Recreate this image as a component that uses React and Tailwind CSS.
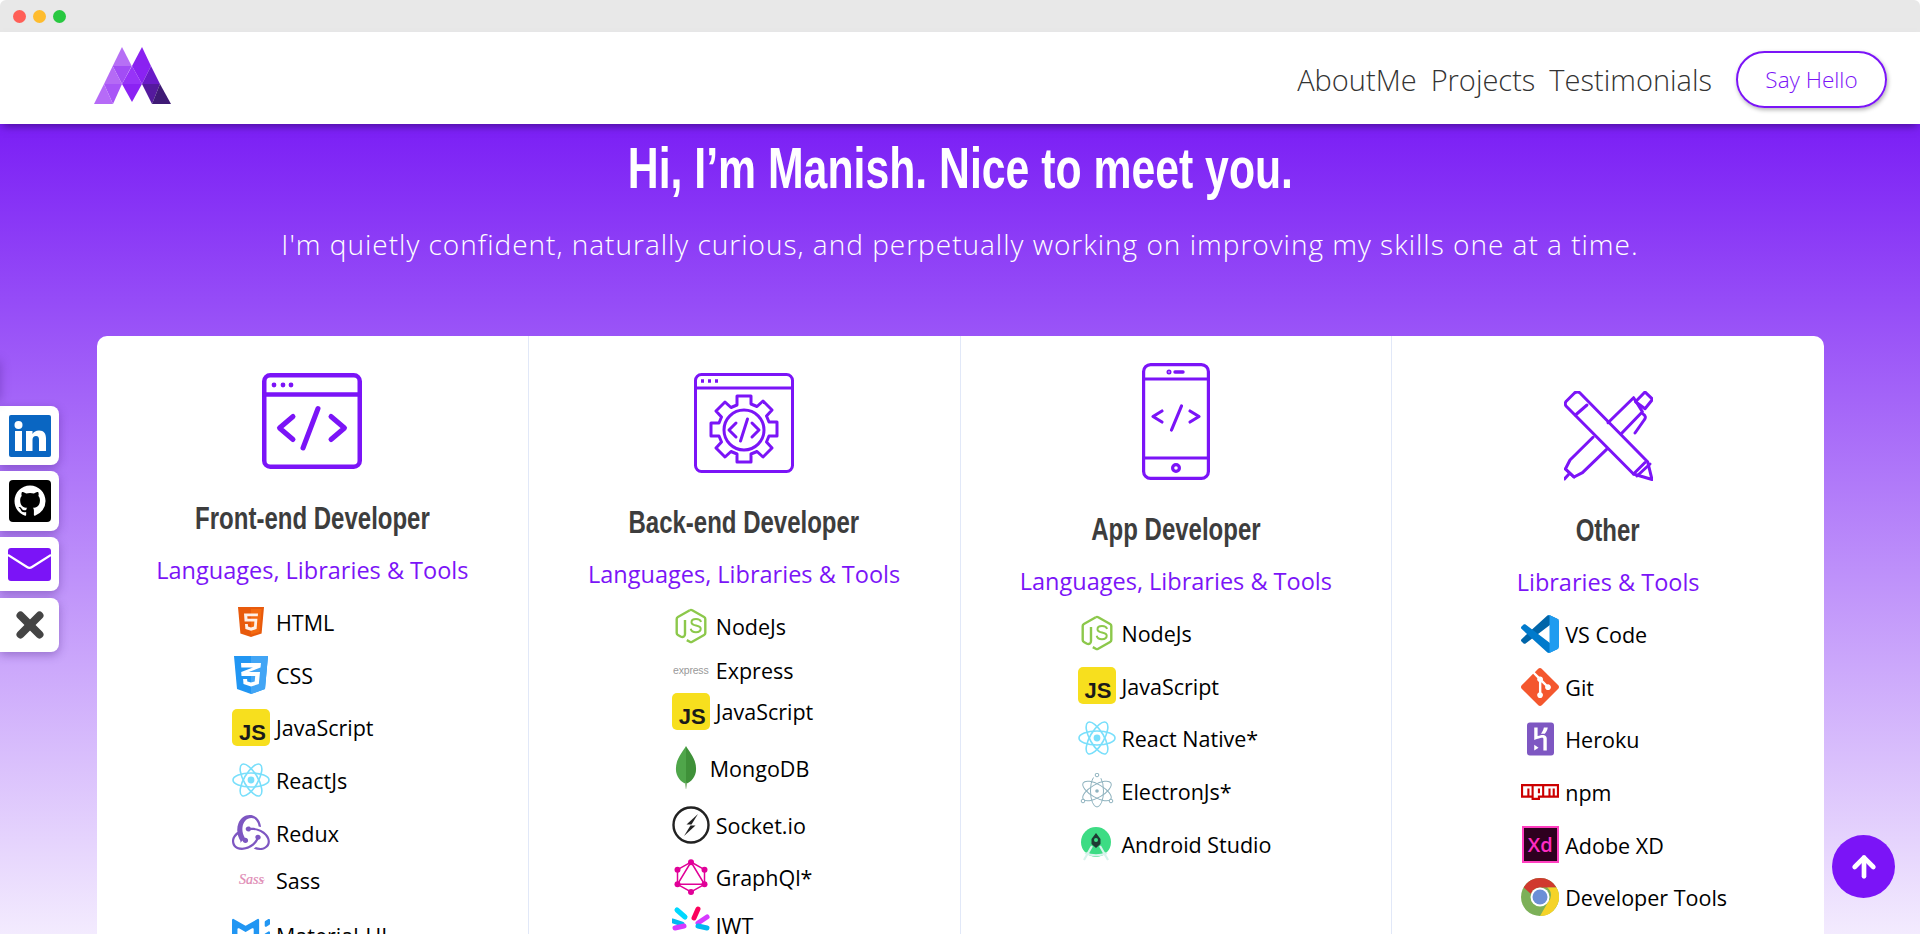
import React from 'react';
import { ArrowUp, X } from 'lucide-react';

const PURPLE = '#7b14f7';

// Brand logos, drawn in a 38px box
const Html5 = () => (
  <svg width="28" height="30" viewBox="0 0 28 30">
    <path d="M1 0h26l-2.400 26.400L14 30 3.400 26.400z" fill="#e85a0c" />
    <path d="M14 2v25.500l8.500-2.400L24.600 2z" fill="#f46a10" />
    <path d="M21 6.500H7l.6 8h9.800l-.4 5-3 .9-3-.9-.2-2.500H8l.4 5 5.600 1.700 5.600-1.700.8-10.200H10.500l-.2-2.500h10.500z" fill="#fff" fillOpacity=".9" />
  </svg>
);

const Css3 = () => (
  <svg width="34" height="38" viewBox="0 0 34 38">
    <path d="M0 0h34l-3 33-14 5-14-5z" fill="#2196f3" />
    <path d="M17 0h17l-3 33-14 5z" fill="#42a5f5" />
    <path d="M7 7h20l-.5 4.500L15 16h11l-1.200 12L17 30.500 9.500 28l-.4-5h4l.2 2.400 3.700 1 3.700-1 .5-5.400H7.500l-.3-4L19 11.500H7.300z" fill="#fff" />
  </svg>
);

const JsLogo = () => (
  <div className="w-[38px] h-[37px] rounded-[5px] bg-[#f7df1e] flex items-end justify-end pr-[4px] pb-[1px]">
    <span className="font-['Liberation_Sans'] font-bold text-[22px] leading-[24px] text-[#1a1a1a]">JS</span>
  </div>
);

const ReactLogo = () => (
  <svg width="38" height="34" viewBox="-19 -17 38 34" fill="none" stroke="#79dffb" strokeWidth="1.600">
    <ellipse rx="18" ry="7" />
    <ellipse rx="18" ry="7" transform="rotate(60)" />
    <ellipse rx="18" ry="7" transform="rotate(120)" />
    <circle r="3.400" fill="#79dffb" stroke="none" />
  </svg>
);

const Redux = () => (
  <svg width="38" height="36" viewBox="0 0 24 24" fill="#7e57c2" preserveAspectRatio="none">
    <path d="M16.634 16.504c.87-.075 1.543-.84 1.5-1.754-.047-.914-.796-1.648-1.709-1.648h-.061a1.71 1.71 0 00-1.648 1.769c.03.479.226.869.494 1.153-1.048 2.038-2.621 3.536-5.005 4.795-1.603.838-3.296 1.154-4.944.93-1.378-.195-2.456-.81-3.116-1.799-.988-1.499-1.078-3.116-.255-4.734.6-1.17 1.499-2.023 2.099-2.443a9.96 9.96 0 01-.42-1.543C-.868 14.408-.416 18.752.932 20.805c1.004 1.498 3.057 2.456 5.304 2.456.6 0 1.23-.044 1.843-.194 3.897-.749 6.848-3.086 8.541-6.532zm5.348-3.746c-2.32-2.728-5.738-4.226-9.634-4.226h-.51c-.253-.554-.837-.899-1.498-.899h-.045c-.943 0-1.678.81-1.647 1.753.03.898.794 1.648 1.708 1.648h.06a1.69 1.69 0 001.499-1.049h.54c2.306 0 4.5.674 6.479 1.978 1.527 1.004 2.622 2.322 3.236 3.896.51 1.273.48 2.517-.06 3.595-.84 1.6-2.247 2.476-4.107 2.476-1.198 0-2.337-.36-2.937-.63-.33.3-.93.78-1.348 1.08 1.288.6 2.607.93 3.865.93 2.876 0 5.004-1.6 5.813-3.2.87-1.738.81-4.735-1.416-7.352zM6.736 17.005c.03.898.794 1.648 1.708 1.648h.06a1.688 1.688 0 001.648-1.768c0-.9-.779-1.647-1.693-1.647h-.06c-.06 0-.15 0-.226.029-1.243-2.098-1.768-4.347-1.572-6.772.12-1.828.72-3.417 1.797-4.735.9-1.124 2.593-1.68 3.747-1.708 3.236-.061 4.585 3.971 4.689 5.574l1.498.45C17.976 2.562 14.5 0 11.174 0 8.073 0 5.2 2.247 4.07 5.543 2.498 9.95 3.525 14.2 5.46 17.573c-.166.24-.27.614-.24.899z" />
  </svg>
);

const Sass = () => (
  <svg width="28" height="20" viewBox="0 0 28 20" fill="#e08ab4" stroke="#e08ab4" strokeWidth=".2">
    <text x="2" y="14" fontSize="14" fontStyle="italic" fontFamily="Liberation Serif">Sass</text>
    <path d="M23 11c1.500.5 3 0 4.500-1" fill="none" strokeWidth=".8" />
  </svg>
);

const Mui = () => (
  <svg width="38" height="34" viewBox="0 0 36 32" fill="#2196f3">
    <path d="M30.343 21.976a1 1 0 00.502-.864l.018-5.787a1 1 0 01.502-.864l3.137-1.802a1 1 0 011.498.867v10.521a1 1 0 01-.502.867l-11.839 6.8a1 1 0 01-.994.001l-9.291-5.314a1 1 0 01-.504-.868v-5.305c0-.006.007-.01.013-.007.005.003.012 0 .012-.007v-.006c0-.004.002-.008.006-.01l7.652-4.396c.007-.004.004-.015-.004-.015a.008.008 0 01-.008-.008l.015-5.201a1 1 0 00-1.5-.87l-5.687 3.277a1 1 0 01-.998 0L6.666 9.7a1 1 0 00-1.499.866v9.4a1 1 0 01-1.496.869l-3.166-1.81a1 1 0 01-.504-.87l.028-16.43A1 1 0 011.527.86l10.845 6.229a1 1 0 00.996 0L24.21.86a1 1 0 011.498.868v16.434a1 1 0 01-.501.867l-5.678 3.27a1 1 0 00.004 1.735l3.132 1.783a1 1 0 00.993-.002l6.685-3.839zM31 7.234a1 1 0 001.514.857l3-1.8A1 1 0 0036 5.434V1.766A1 1 0 0034.486.91l-3 1.8a1 1 0 00-.486.857v3.668z" />
  </svg>
);

const NodeJs = () => (
  <svg width="34" height="36" viewBox="0 0 34 36" fill="none">
    <path d="M15.800 2.200a2.400 2.400 0 0 1 2.400 0l11.900 6.800a2.400 2.400 0 0 1 1.200 2.100v13.800a2.400 2.400 0 0 1-1.200 2.100l-11.900 6.800a2.400 2.400 0 0 1-2.400 0l-3-1.700" stroke="#8cc84b" strokeWidth="2.400" />
    <path d="M15.800 2.200L3.900 9a2.400 2.400 0 0 0-1.200 2.100v13.800a2.400 2.400 0 0 0 1.200 2.100l2.600 1.500c2.500 1.200 4.500.2 4.500-2.500V12" stroke="#8cc84b" strokeWidth="2.400" />
    <path d="M27 14c-.5-2-2.500-3-5-3s-4.500 1-4.500 3.200c0 2.300 2 2.800 4.500 3.300s4.700 1 4.700 3.300-2.200 3.400-4.700 3.400-4.800-1-5.300-3.400" stroke="#8cc84b" strokeWidth="2" />
  </svg>
);

const ExpressLogo = () => (
  <span className="font-['Liberation_Sans'] text-[10.500px] leading-none text-[#999] tracking-[-0.2px]">express</span>
);

const Mongo = () => (
  <svg className="mr-[9px]" width="22" height="46" viewBox="0 0 24 48">
    <path d="M12 0C9 6 1 13 1 25c0 9 6 14 10 16l1 6z" fill="#4fa64a" />
    <path d="M12 0c3 6 11 13 11 25 0 9-6 14-10 16l-1 6z" fill="#3f9139" />
    <path d="M11.500 40h1l-.2 7h-.6z" fill="#b8c4a8" />
  </svg>
);

const SocketIo = () => (
  <svg width="38" height="38" viewBox="0 0 38 38">
    <circle cx="19" cy="19" r="17.500" fill="none" stroke="#222" strokeWidth="2.400" />
    <path d="M26 8L14.500 18.500h5z" fill="#222" />
    <path d="M12 30l11.500-10.500h-5z" fill="#222" />
  </svg>
);

const GraphQl = () => (
  <svg width="34" height="36" viewBox="0 0 34 36" fill="none" stroke="#e10098" strokeWidth="1.500">
    <path d="M17 3l13.500 7.700v14.600L17 33 3.500 25.300V10.700z" />
    <path d="M17 3l13.500 22.300h-27z" />
    <g fill="#e10098" stroke="none">
      <circle cx="17" cy="3.200" r="3" />
      <circle cx="30.500" cy="10.700" r="3" />
      <circle cx="30.500" cy="25.300" r="3" />
      <circle cx="17" cy="33" r="3" />
      <circle cx="3.500" cy="25.300" r="3" />
      <circle cx="3.500" cy="10.700" r="3" />
    </g>
  </svg>
);

const Jwt = () => (
  <svg width="38" height="38" viewBox="0 0 38 38" strokeWidth="5" strokeLinecap="round">
    <path d="M5 4l8 7" stroke="#00d8ff" />
    <path d="M26 3l-4 9" stroke="#fb015b" />
    <path d="M35 11l-9 6" stroke="#d63aff" />
    <path d="M1 15l9 3" stroke="#00b9f1" />
    <path d="M3 22l9-2" stroke="#d63aff" />
    <path d="M35 22l-9-2" stroke="#00b9f1" />
  </svg>
);

const Electron = () => (
  <svg width="36" height="36" viewBox="-18 -18 36 36" fill="none" stroke="#8fb3bf" strokeWidth="1">
    <ellipse rx="16" ry="6.500" transform="rotate(30)" />
    <ellipse rx="16" ry="6.500" transform="rotate(90)" strokeDasharray="32 10" />
    <ellipse rx="16" ry="6.500" transform="rotate(150)" />
    <circle r="1.800" fill="#8fb3bf" stroke="none" />
    <circle cx="-14" cy="10" r="1.800" fill="#fff" />
    <circle cx="14" cy="10" r="1.800" fill="#fff" />
    <circle cx="0" cy="-16" r="1.800" fill="#fff" />
  </svg>
);

const AndroidStudio = () => (
  <svg width="34" height="34" viewBox="0 0 34 34">
    <circle cx="16" cy="15" r="15" fill="#3ddc84" />
    <path d="M16 6l4.500 6v5l-4.500 4-4.500-4v-5z" fill="#1f3a34" />
    <circle cx="16" cy="13" r="2" fill="#3ddc84" />
    <path d="M12 19L4 33M20 19l8 14M5 26c7 3 15 3 22 0" stroke="#d7f3ec" strokeWidth="2.200" fill="none" />
  </svg>
);

const VsCode = () => (
  <svg width="38" height="38" viewBox="0 0 100 100">
    <path d="M96.460 10.800L75.860.9c-2.380-1.150-5.260-.67-7.140 1.200L1.290 63.580c-1.810 1.650-1.810 4.500.01 6.150l5.510 5.010c1.490 1.350 3.720 1.450 5.320.24L93.340 13.400c2.730-2.070 6.660-.12 6.660 3.300v-.24c0-2.400-1.370-4.580-3.540-5.630z" fill="#0065a9" />
    <path d="M96.460 89.200L75.860 99.100c-2.380 1.140-5.260.66-7.140-1.210L1.290 36.420c-1.810-1.650-1.810-4.500.01-6.150l5.510-5.010c1.490-1.350 3.720-1.450 5.320-.24L93.340 86.600c2.730 2.070 6.660.12 6.660-3.300v.24c0 2.400-1.370 4.580-3.540 5.630z" fill="#007acc" />
    <path d="M75.860 99.130c-2.380 1.140-5.260.66-7.140-1.210 2.300 2.300 6.270.67 6.270-2.590V4.670c0-3.260-3.950-4.900-6.270-2.590 1.880-1.870 4.760-2.350 7.140-1.210l20.600 9.900A6.250 6.250 0 0 1 100 16.400v67.200a6.250 6.250 0 0 1-3.540 5.630z" fill="#1f9cf0" />
  </svg>
);

const Git = () => (
  <svg width="38" height="38" viewBox="0 0 24 24" fill="#f4572e">
    <path d="M23.546 10.930L13.067.452c-.604-.603-1.582-.603-2.188 0L8.708 2.627l2.760 2.760c.645-.215 1.379-.07 1.889.441.516.515.658 1.258.438 1.900l2.658 2.660c.645-.223 1.387-.078 1.900.435.721.72.721 1.884 0 2.604-.719.719-1.881.719-2.600 0-.539-.541-.674-1.337-.404-1.996L12.860 8.955v6.525c.176.086.342.203.488.348.713.721.713 1.883 0 2.600-.719.721-1.889.721-2.609 0-.719-.719-.719-1.879 0-2.598.182-.18.387-.316.605-.406V8.835c-.217-.091-.424-.222-.6-.401-.545-.545-.676-1.342-.396-2.009L7.636 3.700.45 10.881c-.6.605-.6 1.584 0 2.189l10.480 10.477c.604.604 1.582.604 2.186 0l10.430-10.430c.605-.603.605-1.582 0-2.187" />
  </svg>
);

const Heroku = () => (
  <svg width="27" height="34" viewBox="0 0 28 34">
    <rect width="28" height="34" rx="3" fill="#7e57c2" />
    <path d="M7.500 5h3.500v9c3-1.200 5.500-1.500 7-1 1.500.5 2.500 1.800 2.500 3.500V29H17V17c0-1-.5-1.500-2-1.200-1.500.3-3.500 1-7.500 2.200zM17.500 5h4c-.300 2.500-1.300 4.500-3 6.500h-4c1.500-2 2.500-4 3-6.500zM7.500 23l4.500 3-4.500 3z" fill="#fff" />
  </svg>
);

const Npm = () => (
  <svg width="38" height="16" viewBox="0 7.300 24 9.400" preserveAspectRatio="none" fill="#cc0000">
    <path d="M0 7.334v8h6.666v1.332H12v-1.332h12v-8H0zm6.666 6.664H5.334v-4H3.999v4H1.335V8.667h5.331v5.331zm4 0v1.336H8.001V8.667h5.334v5.332h-2.669v-.001zm12.001 0h-1.330v-4h-1.336v4h-1.335v-4h-1.330v4h-2.671V8.667h8.002v5.331zM10.665 10H12v2.667h-1.335V10z" />
  </svg>
);

const AdobeXd = () => (
  <div className="w-[37px] h-[37px] bg-[#2e001f] border-2 border-[#ff3fc0] flex items-center justify-center">
    <span className="font-['Open_Sans'] font-semibold text-[20px] leading-none text-[#ff2bc2]">Xd</span>
  </div>
);

const Chrome = () => (
  <svg width="38" height="38" viewBox="0 0 38 38">
    <circle cx="19" cy="19" r="19" fill="#7cb058" />
    <path d="M19 0a19 19 0 0 1 16.500 9.500H19a9.500 9.500 0 0 0-9 6.500L2.700 9.400A19 19 0 0 1 19 0z" fill="#d0392e" />
    <path d="M35.500 9.500A19 19 0 0 1 19 38l8.200-14.200a9.500 9.500 0 0 0-1-14.300z" fill="#f5d328" />
    <circle cx="19" cy="19" r="9.500" fill="#fff" />
    <circle cx="19" cy="19" r="7.500" fill="#6c8fd6" />
  </svg>
);

// Header illustrations for the four skill columns
const FrontendIcon = () => (
  <svg width="100" height="96" viewBox="0 0 100 96" fill="none" stroke={PURPLE} strokeWidth="4.500" strokeLinecap="round" strokeLinejoin="round">
    <rect x="2.250" y="2.250" width="95.500" height="91.500" rx="6" />
    <path d="M2.250 21.500h95.500" />
    <path d="M31 43.500L17.500 55 31 66.500M69 43.500L82.500 55 69 66.500M56 35.500L41 75" strokeWidth="5" />
    <g fill={PURPLE} stroke="none">
      <circle cx="12" cy="12" r="2.400" />
      <circle cx="21" cy="12" r="2.400" />
      <circle cx="29" cy="12" r="2.400" />
    </g>
  </svg>
);

const BackendIcon = () => (
  <svg width="100" height="100" viewBox="0 0 100 100" fill="none" stroke={PURPLE} strokeWidth="3" strokeLinecap="round" strokeLinejoin="round">
    <rect x="1.500" y="1.500" width="97" height="97" rx="6" />
    <path d="M1.500 15h97" />
    <path d="M7 8h3M14 8h3M21 8h3" strokeWidth="3.400" strokeLinecap="butt" />
    <path d="M43 23h14v8l6 2.500 6-5.500 9 9-5.500 6 2.500 6h8v14h-8l-2.500 6 5.500 6-9 9-6-5.500-6 2.500v8H43v-8l-6-2.500-6 5.500-9-9 5.500-6-2.500-6h-8V50h8l2.500-6-5.500-6 9-9 6 5.500 6-2.500z" />
    <circle cx="50" cy="57" r="20" />
    <path d="M42 50l-7 7 7 7M58 50l7 7-7 7M53.500 46l-7 22" />
  </svg>
);

const AppIcon = () => (
  <svg width="68" height="117" viewBox="0 0 68 117" fill="none" stroke={PURPLE} strokeWidth="3.200" strokeLinecap="round" strokeLinejoin="round">
    <rect x="1.600" y="1.600" width="64.800" height="113.800" rx="7" />
    <path d="M1.600 16h64.800M1.600 95h64.800" />
    <path d="M33 9h8" strokeWidth="3.400" />
    <circle cx="27" cy="9" r=".9" />
    <circle cx="34" cy="105" r="3.400" />
    <path d="M20 48l-9 5.500 9 5.500M48 48l9 5.500-9 5.500M39.500 43l-10 24" />
  </svg>
);

const OtherIcon = () => (
  <svg width="89" height="90" viewBox="0 0 89 90" fill="none" stroke={PURPLE} strokeWidth="3" strokeLinecap="round" strokeLinejoin="round">
    <path d="M2 10.500L10.500 2c2-1.500 4-1.500 5.500 0l67.600 68.700L88 88.500 69.500 83 2 15c-1-1.500-1-3 0-4.500z" />
    <path d="M23 14L11.500 24M81 71.500L69.500 83M73 85l13-12" />
    <path d="M44 31.700L69.600 6.700l8.800 14L57 43" />
    <path d="M29 46.300L6 69l-4.600 9 8.600 8 8.500-4.300 24.100-23.400" />
    <path d="M1.400 78L10 86M5 83l-4.500 5" />
    <path d="M71.500 10.700L81 1l7.600 7.300L81 17.700zM79 23c2.500 1.500 3 3.500 1.500 5.500L71 42" />
  </svg>
);

const columns = [
  {
    key: 'frontend',
    illustration: <FrontendIcon />,
    top: 'pt-[37px]',
    title: 'Front-end Developer',
    subtitle: 'Languages, Libraries & Tools',
    list: 'mt-[10px] ml-[135px]',
    items: [
      { name: 'HTML', logo: <Html5 />, h: 'h-[52.6px]' },
      { name: 'CSS', logo: <Css3 />, h: 'h-[52.6px]' },
      { name: 'JavaScript', logo: <JsLogo />, h: 'h-[52.6px]' },
      { name: 'ReactJs', logo: <ReactLogo />, h: 'h-[52.6px]' },
      { name: 'Redux', logo: <Redux />, h: 'h-[52.6px]' },
      { name: 'Sass', logo: <Sass />, h: 'h-[42px]' },
      { name: 'Material-UI', logo: <Mui />, h: 'h-[68px]' },
    ],
  },
  {
    key: 'backend',
    illustration: <BackendIcon />,
    top: 'pt-[37px]',
    title: 'Back-end Developer',
    subtitle: 'Languages, Libraries & Tools',
    list: 'mt-[12px] ml-[143px]',
    items: [
      { name: 'NodeJs', logo: <NodeJs />, h: 'h-[48px]' },
      { name: 'Express', logo: <ExpressLogo />, h: 'h-[40px]' },
      { name: 'JavaScript', logo: <JsLogo />, h: 'h-[42px]' },
      { name: 'MongoDB', logo: <Mongo />, h: 'h-[72px]', label: '-ml-[6px]' },
      { name: 'Socket.io', logo: <SocketIo />, h: 'h-[42px]' },
      { name: 'GraphQl*', logo: <GraphQl />, h: 'h-[62px]' },
      { name: 'JWT', logo: <Jwt />, h: 'h-[34px]' },
    ],
  },
  {
    key: 'app',
    illustration: <AppIcon />,
    top: 'pt-[27px]',
    title: 'App Developer',
    subtitle: 'Languages, Libraries & Tools',
    list: 'mt-[10px] ml-[117px]',
    items: [
      { name: 'NodeJs', logo: <NodeJs />, h: 'h-[52.6px]' },
      { name: 'JavaScript', logo: <JsLogo />, h: 'h-[52.6px]' },
      { name: 'React Native*', logo: <ReactLogo />, h: 'h-[52.6px]' },
      { name: 'ElectronJs*', logo: <Electron />, h: 'h-[52.6px]' },
      { name: 'Android Studio', logo: <AndroidStudio />, h: 'h-[52.6px]' },
    ],
  },
  {
    key: 'other',
    illustration: <OtherIcon />,
    top: 'pt-[55px]',
    title: 'Other',
    subtitle: 'Libraries & Tools',
    list: 'mt-[10px] ml-[129px]',
    items: [
      { name: 'VS Code', logo: <VsCode />, h: 'h-[52.6px]' },
      { name: 'Git', logo: <Git />, h: 'h-[52.6px]' },
      { name: 'Heroku', logo: <Heroku />, h: 'h-[52.6px]' },
      { name: 'npm', logo: <Npm />, h: 'h-[52.6px]' },
      { name: 'Adobe XD', logo: <AdobeXd />, h: 'h-[52.6px]' },
      { name: 'Developer Tools', logo: <Chrome />, h: 'h-[52.6px]' },
    ],
  },
];

const Logo = () => (
  <svg className="mb-[5px]" width="77" height="57" viewBox="0 0 77 57">
    <path d="M28 0L18.700 19h19z" fill="#b66ff5" />
    <path d="M18.700 19h19L28 37z" fill="#a24df5" />
    <path d="M18.700 19L28 37H10z" fill="#b56af5" />
    <path d="M38 19L28 37h20z" fill="#9733f8" />
    <path d="M48 0L38 19h19z" fill="#8a22f0" />
    <path d="M38 19h19l-9 18z" fill="#8a22f2" />
    <path d="M57 19l-9 18h18z" fill="#6a1bc8" />
    <path d="M10 37h18L19 57z" fill="#a855f7" />
    <path d="M10 37L0 57h19z" fill="#b66bf7" />
    <path d="M28 37h20L38 55z" fill="#8b22f3" />
    <path d="M48 37h18l-8 20z" fill="#551a9e" />
    <path d="M66 37l-8 20h19z" fill="#3f1a75" />
  </svg>
);

function SkillColumn({ column }) {
  return (
    <div className={`flex flex-col border-r border-[#e1e8f8] last:border-r-0 ${column.top}`}>
      <div className="flex justify-center">{column.illustration}</div>
      <h3 className="mt-[29px] h-[40px] text-center text-[#3d3d3d]">
        <span className="inline-block scale-x-75 whitespace-nowrap font-['Liberation_Sans',sans-serif] font-bold text-[32px] leading-[40px]">
          {column.title}
        </span>
      </h3>
      <p className="mt-[16px] h-[32px] text-center text-[23.5px] leading-[32px] text-[#7b14f7]">{column.subtitle}</p>
      <ul className={column.list}>
        {column.items.map((item) => (
          <li key={item.name} className={`flex items-center gap-[6px] ${item.h}`}>
            <span className="w-[38px] flex justify-center items-center shrink-0">{item.logo}</span>
            <span className={`pt-[2px] text-[21.5px] leading-[30px] text-black whitespace-nowrap ${item.label || ''}`}>{item.name}</span>
          </li>
        ))}
      </ul>
    </div>
  );
}

const tabClass = 'w-[59px] bg-white rounded-r-lg shadow-[0_3px_10px_rgba(60,20,120,0.35)] flex items-center justify-center';

function SocialRail() {
  return (
    <div className="fixed left-0 top-[406px] flex flex-col gap-[6px]">
      <div className={`${tabClass} h-[59px]`}>
        <svg width="42" height="42" viewBox="0 0 42 42">
          <rect width="42" height="42" rx="2" fill="#0a66c2" />
          <circle cx="9.500" cy="10" r="4" fill="#fff" />
          <path d="M6 16h7v20H6zM17 16h6.500v3c1.200-2 3.500-3.500 6.500-3.500 5 0 7 3 7 8V36h-7V25c0-2.500-.8-4-3-4s-3.500 1.500-3.500 4v11H17z" fill="#fff" />
        </svg>
      </div>
      <div className={`${tabClass} h-[60px]`}>
        <svg width="42" height="42" viewBox="0 0 42 42">
          <rect width="42" height="42" rx="4" fill="#000" />
          <path fill="#fff" fillRule="evenodd" transform="translate(5.500 5.500) scale(1.940)" d="M8 0C3.580 0 0 3.580 0 8c0 3.540 2.290 6.530 5.470 7.590.4.070.55-.17.55-.38 0-.19-.01-.82-.01-1.490-2.010.37-2.530-.49-2.690-.94-.09-.23-.48-.94-.82-1.130-.28-.15-.68-.52-.01-.53.63-.01 1.080.58 1.230.82.720 1.210 1.870.87 2.330.66.070-.52.280-.87.510-1.070-1.780-.2-3.640-.89-3.640-3.950 0-.87.310-1.590.820-2.150-.080-.2-.360-1.020.080-2.120 0 0 .670-.210 2.200.820.640-.180 1.320-.270 2-.270.680 0 1.360.090 2 .270 1.530-1.040 2.200-.820 2.200-.820.440 1.100.160 1.920.080 2.120.510.560.820 1.270.820 2.150 0 3.070-1.870 3.750-3.650 3.950.290.250.540.730.540 1.480 0 1.070-.010 1.930-.010 2.200 0 .210.150.460.550.380A8.013 8.013 0 0016 8c0-4.420-3.580-8-8-8z" />
        </svg>
      </div>
      <div className={`${tabClass} h-[54px]`}>
        <svg width="43" height="33" viewBox="0 0 43 33">
          <rect width="43" height="33" rx="3" fill={PURPLE} />
          <path d="M0 7l19 12c1.500 1 3.500 1 5 0L43 7" fill="none" stroke="#fff" strokeWidth="2.200" />
        </svg>
      </div>
      <div className={`${tabClass} h-[54px] mt-[1px]`}>
        <X size={38} strokeWidth={5} color="#444" />
      </div>
    </div>
  );
}

export default function App() {
  return (
    <div className="relative h-[934px] overflow-hidden font-['Open_Sans',sans-serif]">
      {/* Window chrome */}
      <div className="h-[32px] bg-[#e8e8e8] rounded-t-md flex items-center gap-[7px] pl-[13px]">
        <span className="w-[13px] h-[13px] rounded-full bg-[#ff5f57]" />
        <span className="w-[13px] h-[13px] rounded-full bg-[#febc2e]" />
        <span className="w-[13px] h-[13px] rounded-full bg-[#28c840]" />
      </div>

      {/* Navbar */}
      <nav className="relative z-10 h-[92px] bg-white flex items-center pl-[94px] pr-[33px] shadow-[0_5px_8px_-3px_rgba(40,0,90,0.6)]">
        <Logo />
        <div className="ml-auto mt-[3px] flex items-center gap-[14px] text-[29px] font-light text-[#333]">
          <a>AboutMe</a>
          <a>Projects</a>
          <a>Testimonials</a>
          <a className="ml-[10px] w-[151px] h-[57px] rounded-full border-2 border-[#7b14f7] flex items-center justify-center text-[22.5px] font-light text-[#7b14f7] shadow-[1px_2px_4px_rgba(0,0,0,0.3)]">
            Say Hello
          </a>
        </div>
      </nav>

      {/* Hero + skills */}
      <main className="h-[810px] bg-[linear-gradient(180deg,#7b1ff5,#f3ebfe)] flex flex-col">
        <h1 className="mt-[14px] h-[60px] text-center text-white">
          <span className="inline-block scale-x-75 whitespace-nowrap font-['Liberation_Sans',sans-serif] font-bold text-[57px] leading-[60px]">
            Hi, I’m Manish. Nice to meet you.
          </span>
        </h1>
        <p className="mt-[24px] h-[44px] text-center text-[28px] tracking-[1px] leading-[44px] font-light text-white">
          I'm quietly confident, naturally curious, and perpetually working on improving my skills one at a time.
        </p>
        <section className="mt-[70px] ml-[97px] w-[1727px] h-[620px] bg-white rounded-t-[10px] grid grid-cols-4">
          {columns.map((column) => (
            <SkillColumn key={column.key} column={column} />
          ))}
        </section>
      </main>

      <SocialRail />
      <div className="fixed left-[-40px] top-[358px] w-[40px] h-[40px] shadow-[0_3px_10px_rgba(60,20,120,0.35)]" />

      <button className="fixed left-[1832px] top-[835px] w-[63px] h-[63px] rounded-full bg-[#7b14f7] flex items-center justify-center">
        <ArrowUp size={32} strokeWidth={3.500} color="#fff" />
      </button>
    </div>
  );
}
